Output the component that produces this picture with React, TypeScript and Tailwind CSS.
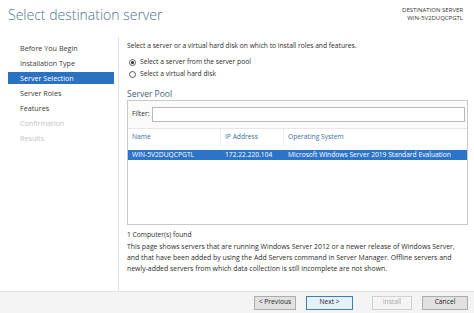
import React from "react";

const navItems: { label: string; state: "normal" | "active" | "disabled" }[] = [
  { label: "Before You Begin", state: "normal" },
  { label: "Installation Type", state: "normal" },
  { label: "Server Selection", state: "active" },
  { label: "Server Roles", state: "normal" },
  { label: "Features", state: "normal" },
  { label: "Confirmation", state: "disabled" },
  { label: "Results", state: "disabled" },
];

function Radio({ checked }: { checked: boolean }) {
  return (
    <span className="w-[7px] h-[7px] rounded-full border border-[#5a5a5a] bg-white flex items-center justify-center shrink-0">
      {checked && <span className="w-[3px] h-[3px] rounded-full bg-[#2a2a2a]" />}
    </span>
  );
}

export default function App() {
  return (
    <div className="w-[474px] h-[313px] bg-white flex flex-col overflow-hidden font-['Open_Sans',sans-serif] text-[#2b2b2b]">
      {/* Header */}
      <div className="h-[37px] flex justify-between items-start pl-[8px] pr-[11px] shrink-0">
        <div className="mt-[6px] text-[14px] leading-[18px] font-light text-[#4c7686]">
          Select destination server
        </div>
        <div className="mt-[6px] text-right text-[6px] leading-[8px] text-[#333]">
          <div>DESTINATION SERVER</div>
          <div>WIN-5V2DUQCPGTL</div>
        </div>
      </div>

      {/* Body */}
      <div className="flex h-[254px] shrink-0">
        <div className="w-[119px] border-r border-[#e3e3e3] pt-[5px] flex flex-col gap-[3px] shrink-0">
          {navItems.map((it) => (
            <div
              key={it.label}
              className={
                "ml-[8px] mr-[4px] h-[12px] pl-[12px] flex items-center text-[7.2px] " +
                (it.state === "active"
                  ? "bg-[#2a72c0] text-white"
                  : it.state === "disabled"
                  ? "text-[#c4c4c4]"
                  : "text-[#3a3a3a]")
              }
            >
              {it.label}
            </div>
          ))}
        </div>

        <div className="flex-1 pl-[8px] pr-[6px] pt-[4px] flex flex-col text-[6.7px]">
          <div className="h-[9px] leading-[9px]">
            Select a server or a virtual hard disk on which to install roles and features.
          </div>
          <div className="mt-[9px] flex flex-col gap-[5px] pl-[2px]">
            <div className="h-[7px] flex items-center gap-[4px]">
              <Radio checked />
              <span>Select a server from the server pool</span>
            </div>
            <div className="h-[7px] flex items-center gap-[4px]">
              <Radio checked={false} />
              <span>Select a virtual hard disk</span>
            </div>
          </div>
          <div className="mt-[10px] h-[11px] leading-[11px] text-[8.5px] text-[#3d6577]">Server Pool</div>

          {/* Pool box */}
          <div className="mt-[1px] h-[125px] border border-[#c9c9c9] flex flex-col">
            <div className="h-[27px] flex items-center pl-[4px] pr-[2px] gap-[3px] bg-[#fbfbfb]">
              <span>Filter:</span>
              <div className="flex-1 h-[15px] border border-[#b8b8b8] bg-white" />
            </div>
            <div className="h-[18px] flex items-center border-t border-[#e6e6e6] text-[#3d6fa0]">
              <div className="w-[93px] pl-[4px] h-full flex items-center border-r border-[#eeeeee]">Name</div>
              <div className="w-[63px] pl-[4px] h-full flex items-center border-r border-[#eeeeee]">IP Address</div>
              <div className="flex-1 pl-[4px] h-full flex items-center">Operating System</div>
            </div>
            <div className="mt-[4px] h-[10px] flex items-center bg-[#2c74c8] text-white">
              <div className="w-[93px] pl-[4px]">WIN-5V2DUQCPGTL</div>
              <div className="w-[63px] pl-[4px]">172.22.220.104</div>
              <div className="flex-1 pl-[4px] whitespace-nowrap">Microsoft Windows Server 2019 Standard Evaluation</div>
            </div>
          </div>

          <div className="mt-[4px] h-[11px] leading-[11px]">1 Computer(s) found</div>
          <div className="mt-[1px] leading-[11px] whitespace-nowrap text-[6.9px]">
            This page shows servers that are running Windows Server 2012 or a newer release of Windows Server,
            <br />
            and that have been added by using the Add Servers command in Server Manager. Offline servers and
            <br />
            newly-added servers from which data collection is still incomplete are not shown.
          </div>
        </div>
      </div>

      {/* Footer */}
      <div className="flex-1 bg-[#f4f4f4] border-t border-[#e3e3e3] flex items-center justify-end pr-[6px] text-[6.7px]">
        <button className="w-[42px] h-[14px] border border-[#adadad] bg-[#e1e1e1] text-[#222]">&lt; Previous</button>
        <button className="ml-[10px] w-[47px] h-[14px] border border-[#3c7fb1] bg-[#e5f1fb] text-[#222]">Next &gt;</button>
        <button className="ml-[19px] w-[40px] h-[14px] border border-[#d2d2d2] bg-[#f4f4f4] text-[#a8a8a8]">Install</button>
        <button className="ml-[10px] w-[46px] h-[14px] border border-[#adadad] bg-[#e1e1e1] text-[#222]">Cancel</button>
      </div>
    </div>
  );
}
